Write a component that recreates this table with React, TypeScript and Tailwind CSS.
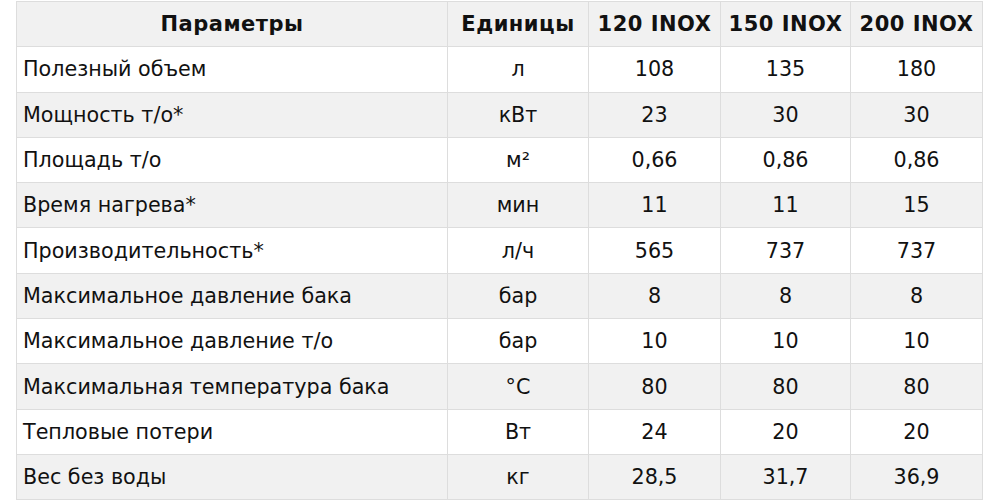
const rows: [string, string, string, string, string][] = [
  ["Полезный объем", "л", "108", "135", "180"],
  ["Мощность т/о*", "кВт", "23", "30", "30"],
  ["Площадь т/о", "м²", "0,66", "0,86", "0,86"],
  ["Время нагрева*", "мин", "11", "11", "15"],
  ["Производительность*", "л/ч", "565", "737", "737"],
  ["Максимальное давление бака", "бар", "8", "8", "8"],
  ["Максимальное давление т/о", "бар", "10", "10", "10"],
  ["Максимальная температура бака", "°C", "80", "80", "80"],
  ["Тепловые потери", "Вт", "24", "20", "20"],
  ["Вес без воды", "кг", "28,5", "31,7", "36,9"],
];

const cell = "border border-[#dddddd] h-[45.3px] p-0 pt-px";

export default function App() {
  return (
    <div className="h-[500px] w-[1000px] bg-white pl-4 pt-px font-['DejaVu_Sans',Verdana,sans-serif] text-[20.7px] text-[#111111]">
      <table className="w-[966px] table-fixed border-collapse">
        <colgroup>
          <col className="w-[431px]" />
          <col className="w-[141px]" />
          <col className="w-[132px]" />
          <col className="w-[130px]" />
          <col className="w-[132px]" />
        </colgroup>
        <thead>
          <tr className="bg-[#f1f1f1] text-[21px] font-bold tracking-[0.5px]">
            <th className={cell + " text-center"}>Параметры</th>
            <th className={cell + " text-center"}>Единицы</th>
            <th className={cell + " text-center"}>120 INOX</th>
            <th className={cell + " text-center"}>150 INOX</th>
            <th className={cell + " text-center"}>200 INOX</th>
          </tr>
        </thead>
        <tbody>
          {rows.map((r, i) => (
            <tr key={r[0]} className={i % 2 === 1 ? "bg-[#f1f1f1]" : "bg-white"}>
              <td className={cell + " pl-[6px] text-left"}>{r[0]}</td>
              {r.slice(1).map((v, j) => (
                <td key={j} className={cell + " text-center"}>
                  {v}
                </td>
              ))}
            </tr>
          ))}
        </tbody>
      </table>
    </div>
  );
}
